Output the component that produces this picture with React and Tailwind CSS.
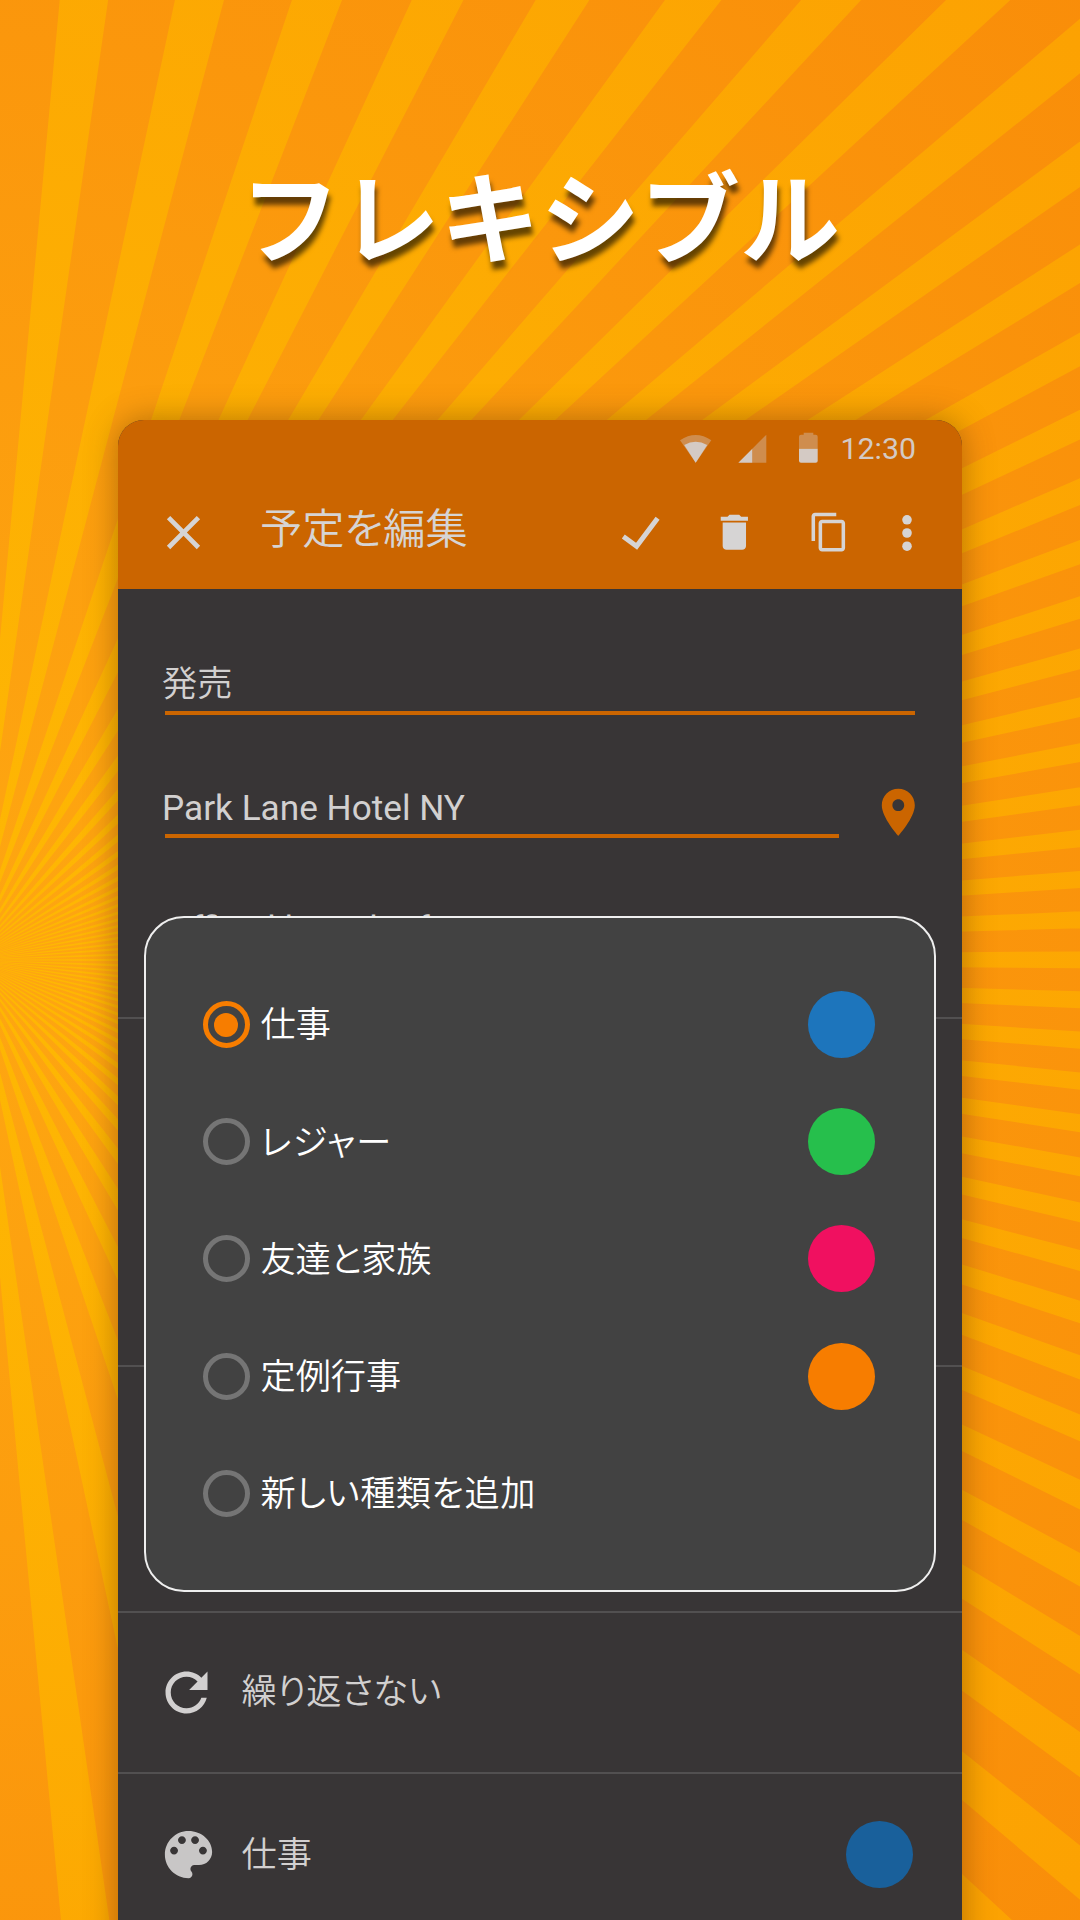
const CENTER_X = -30;
const CENTER_Y = 960;
const STRETCH = 1.82;
const STEP = 3.75;

// Sunburst wedge edge: an angle measured from straight up, stretched horizontally.
function edge(deg) {
  const a = (deg * Math.PI) / 180;
  const r = 3000;
  return `${(CENTER_X + STRETCH * r * Math.sin(a)).toFixed(2)} ${(CENTER_Y - r * Math.cos(a)).toFixed(2)}`;
}

const RAYS = Array.from({ length: 50 }, (_, i) => {
  const start = -0.81 + i * STEP;
  return `M${CENTER_X} ${CENTER_Y}L${edge(start)}L${edge(start + 1.58)}Z`;
}).join("");

function Sunburst() {
  return (
    <svg className="absolute inset-0" width="1080" height="1920" viewBox="0 0 1080 1920">
      <defs>
        <radialGradient id="base" gradientUnits="userSpaceOnUse" cx="-30" cy="960" r="1500">
          <stop offset="0" stopColor="#fea711" />
          <stop offset="1" stopColor="#f98d09" />
        </radialGradient>
        <radialGradient id="ray" gradientUnits="userSpaceOnUse" cx="-30" cy="960" r="1500">
          <stop offset="0" stopColor="#feb803" />
          <stop offset="1" stopColor="#fca102" />
        </radialGradient>
      </defs>
      <rect width="1080" height="1920" fill="url(#base)" />
      <path d={RAYS} fill="url(#ray)" />
    </svg>
  );
}

function StatusBar() {
  return (
    <div className="flex h-[56px] items-center justify-end pr-[46px] text-[#d4cac4]">
      <svg className="mr-[23px]" width="138" height="32" viewBox="680 431 138 32" fill="currentColor">
        <g transform="translate(0 -0.3)">
          <path opacity=".4" d="M680 439.5Q695.7 429 711.3 439.5L695.7 462Z" />
          <path d="M684.2 444.2Q695.7 438 707.2 444.2L695.7 462Z" />
          <path opacity=".4" d="M752.3 448L766.3 434V462H752.3Z" />
          <path d="M738.3 462L752.3 448V462Z" />
          <path opacity=".4" d="M803.7 434V432H813.3V434H815.7Q817.7 434 817.7 436V448H799V436Q799 434 801 434Z" />
          <path d="M799 448H817.7V460Q817.7 462 815.7 462H801Q799 462 799 460Z" />
        </g>
      </svg>
      <span className="mt-[2px] text-[30.3px] leading-none font-['Roboto']">12:30</span>
    </div>
  );
}

function AppBar() {
  return (
    <header className="h-[169px] bg-[#cb6500] text-[#d6d4d4]">
      <StatusBar />
      <div className="flex h-[113px] items-center">
        <svg className="ml-[37px]" width="57" height="57" viewBox="0 0 24 24" fill="currentColor">
          <path d="M19 6.41L17.59 5 12 10.59 6.41 5 5 6.41 10.59 12 5 17.59 6.41 19 12 13.41 17.59 19 19 17.59 13.41 12z" />
        </svg>
        <h2 className="ml-[48px] -mt-[12px] w-[350px] text-[42.2px] leading-none font-[350]">予定を編集</h2>
        <svg className="ml-[10px]" width="42" height="40" viewBox="620 512 42 40" fill="none" stroke="currentColor" strokeWidth="5">
          <path d="M623.3 535.6L636.6 545.3L657.6 517.3" />
        </svg>
        <svg className="ml-[49px]" width="46.7" height="46.7" viewBox="0 0 24 24" fill="currentColor">
          <path d="M6 19c0 1.1.9 2 2 2h8c1.1 0 2-.9 2-2V7H6v12zM19 4h-3.5l-1-1h-5l-1 1H5v2h14V4z" />
        </svg>
        <svg className="ml-[50px]" width="42.4" height="42.4" viewBox="0 0 24 24" fill="currentColor">
          <path d="M16 1H4c-1.1 0-2 .9-2 2v14h2V3h12V1zm3 4H8c-1.1 0-2 .9-2 2v14c0 1.1.9 2 2 2h11c1.1 0 2-.9 2-2V7c0-1.1-.9-2-2-2zm0 16H8V7h11v14z" />
        </svg>
        <svg className="ml-[47px]" width="20" height="42" viewBox="0 0 20 42" fill="currentColor">
          <circle cx="10" cy="7.8" r="4.8" />
          <circle cx="10" cy="21" r="4.8" />
          <circle cx="10" cy="34.2" r="4.8" />
        </svg>
      </div>
    </header>
  );
}

function EventForm() {
  return (
    <div className="h-[430px] border-b-2 border-[#525051] px-[47px] text-[35.2px] text-[#d2d0d0]">
      <div className="flex h-[126px] items-end border-b-4 border-[#cb6500] pb-[6px]">
        <span className="-ml-[3px] leading-[48px] font-[350]">発売</span>
      </div>
      <div className="flex justify-between">
        <div className="flex h-[123px] w-[674px] items-end border-b-4 border-[#cb6500] pb-[2px]">
          <span className="-ml-[3px] leading-[48px] font-['Roboto']">Park Lane Hotel NY</span>
        </div>
        <svg className="mt-[69px] -mr-[12px] -mb-[10px] text-[#cb6500]" width="56.6" height="56.6" viewBox="0 0 24 24" fill="currentColor">
          <path d="M12 2C8.13 2 5 5.13 5 9c0 5.25 7 13 7 13s7-7.75 7-13c0-3.87-3.13-7-7-7zm0 9.5c-1.38 0-2.5-1.12-2.5-2.5s1.12-2.5 2.5-2.5 2.5 1.12 2.5 2.5-1.12 2.5-2.5 2.5z" />
        </svg>
      </div>
      <p className="ml-[6px] mt-[67px] leading-[48px] font-['Roboto']">official launch of premium</p>
    </div>
  );
}

function Swatch({ className }) {
  return <span className={`block size-[67px] rounded-full ${className}`} />;
}

const OPTIONS = [
  { label: "仕事", color: "bg-[#1d75bc]", selected: true },
  { label: "レジャー", color: "bg-[#26bf4c]", tracking: "tracking-[1.2px]" },
  { label: "友達と家族", color: "bg-[#f01060]", tracking: "tracking-[-0.2px]" },
  { label: "定例行事", color: "bg-[#f77d00]" },
  { label: "新しい種類を追加", tracking: "tracking-[0.5px]" },
];

function TypeDialog() {
  return (
    <div
      role="dialog"
      className="absolute left-[26px] top-[496px] h-[676px] w-[792px] rounded-[40px] border-2 border-[#efefef] bg-[#424242] pt-[48px]"
    >
      {OPTIONS.map((o) => (
        <div key={o.label} className="flex h-[117.2px] items-center pr-[59.5px] pl-[56.5px]">
          <span
            className={`flex size-[47px] items-center justify-center rounded-full border-5 ${
              o.selected ? "border-[#f77d00]" : "border-[#757575]"
            }`}
          >
            {o.selected && <span className="size-[24px] rounded-full bg-[#f77d00]" />}
          </span>
          <span className={`-mt-[5px] ml-[11px] flex-1 text-[35.2px] leading-none font-[350] text-white ${o.tracking ?? ""}`}>
            {o.label}
          </span>
          {o.color && <Swatch className={o.color} />}
        </div>
      ))}
    </div>
  );
}

export default function App() {
  return (
    <main className="relative h-[1920px] w-[1080px] overflow-hidden font-['Noto_Sans_CJK_JP',sans-serif] [font-feature-settings:'palt']">
      <Sunburst />
      <div className="relative flex flex-col items-center">
        <h1 className="flex h-[420px] items-center pt-[5px] text-[100px] leading-none font-bold text-white [font-feature-settings:normal] [text-shadow:2px_8px_5px_rgba(0,0,0,0.6)]">
          フレキシブル
        </h1>
        <section className="relative h-[1540px] w-[844px] overflow-hidden rounded-t-[26px] bg-[#383536] shadow-[0_0_32px_rgba(90,50,0,0.45)]">
          <AppBar />
          <EventForm />
          <div className="h-[348px] border-b-2 border-[#525051]" />
          <div className="h-[246px] border-b-2 border-[#525051]" />
          <div className="flex h-[161px] items-center border-b-2 border-[#525051] text-[#d2d0d0]">
            <svg className="ml-[36.5px]" width="63" height="63" viewBox="0 0 24 24" fill="currentColor">
              <path d="M17.65 6.35C16.2 4.9 14.21 4 12 4c-4.42 0-7.99 3.58-7.99 8s3.57 8 7.99 8c3.73 0 6.84-2.55 7.73-6h-2.08c-.82 2.33-3.04 4-5.65 4-3.31 0-6-2.69-6-6s2.69-6 6-6c1.66 0 3.14.69 4.22 1.78L13 11h7V4l-2.35 2.35z" />
            </svg>
            <span className="-mt-[7px] ml-[24px] text-[35.2px] leading-none font-[350] tracking-[0.2px]">繰り返さない</span>
          </div>
          <div className="flex h-[161px] items-center pr-[49px] pl-[38.5px] text-[#c8c6c6]">
            <svg width="63" height="63" viewBox="0 0 24 24" fill="currentColor">
              <path d="M12 3c-4.97 0-9 4.03-9 9s4.03 9 9 9c.83 0 1.5-.67 1.5-1.5 0-.39-.15-.74-.39-1.01-.23-.26-.38-.61-.38-.99 0-.83.67-1.5 1.5-1.5H16c2.76 0 5-2.24 5-5 0-4.42-4.03-8-9-8zm-5.5 9c-.83 0-1.5-.67-1.5-1.5S5.67 9 6.5 9 8 9.67 8 10.5 7.33 12 6.5 12zm3-4C8.67 8 8 7.33 8 6.5S8.67 5 9.5 5s1.5.67 1.5 1.5S10.33 8 9.5 8zm5 0c-.83 0-1.5-.67-1.5-1.5S13.67 5 14.5 5s1.5.67 1.5 1.5S15.33 8 14.5 8zm3 4c-.83 0-1.5-.67-1.5-1.5S16.67 9 17.5 9s1.5.67 1.5 1.5-.67 1.5-1.5 1.5z" />
            </svg>
            <span className="-mt-[6px] ml-[22px] flex-1 text-[35.2px] leading-none font-[350] text-[#d2d0d0]">仕事</span>
            <Swatch className="bg-[#19609b]" />
          </div>
          <TypeDialog />
        </section>
      </div>
    </main>
  );
}
